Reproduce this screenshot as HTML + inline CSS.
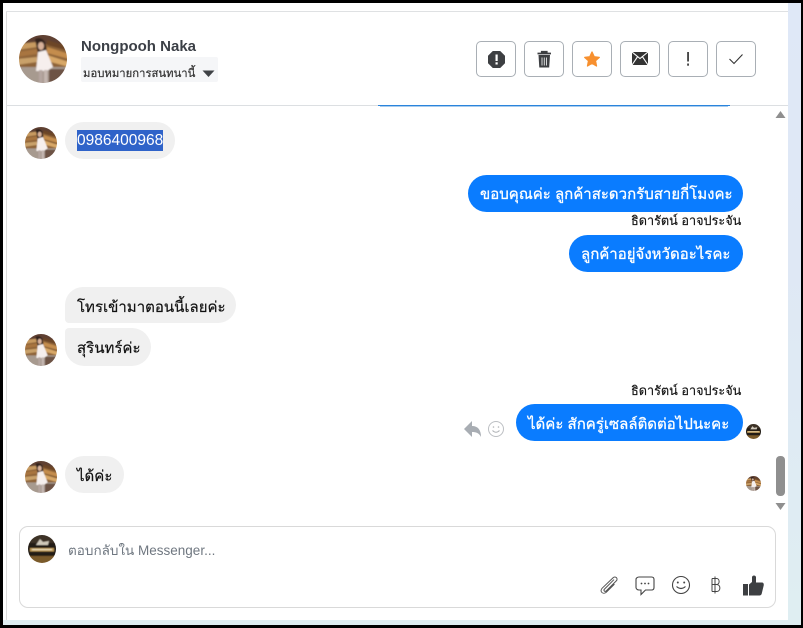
<!DOCTYPE html>
<html><head><meta charset="utf-8">
<style>
html,body{margin:0;padding:0;width:803px;height:628px;overflow:hidden;background:#000}
*{box-sizing:border-box}
body{position:relative;font-family:"Liberation Sans","Noto Sans CJK SC",sans-serif}
.a{position:absolute}
.t{position:absolute;white-space:nowrap;font-family:"Liberation Sans","DejaVu Sans","Noto Sans CJK SC",sans-serif}
.b{position:absolute;border-radius:19px;height:37px;font-size:15px;line-height:40px;padding:0 12px;white-space:nowrap;font-family:"Liberation Sans","DejaVu Sans",sans-serif}
.in{background:#f0f0f0;color:#111;-webkit-text-stroke:.2px #111;line-height:42px}
.out{background:#0a7cff;color:#fff;-webkit-text-stroke:.3px #fff}
.btn{position:absolute;top:41px;width:40px;height:36px;border:1px solid #a9afb5;border-radius:5px;background:#fff}
.btn svg{position:absolute;left:0;top:0;width:38px;height:34px}
.name{position:absolute;font-size:12.700px;color:#111;white-space:nowrap;font-family:"Liberation Sans","DejaVu Sans",sans-serif;-webkit-text-stroke:.15px #111}
svg.av{position:absolute}
</style></head><body>
<svg width="0" height="0" style="position:absolute">
<defs>
<clipPath id="c"><circle cx="24" cy="24" r="24"/></clipPath>
<clipPath id="d"><circle cx="14" cy="14" r="14"/></clipPath>
<filter id="bl" x="-10%" y="-10%" width="120%" height="120%"><feGaussianBlur stdDeviation="0.900"/></filter>
<filter id="bl2" x="-10%" y="-10%" width="120%" height="120%"><feGaussianBlur stdDeviation="0.500"/></filter>
<symbol id="girl" viewBox="0 0 48 48">
<g clip-path="url(#c)"><g filter="url(#bl)">
<rect x="-2" y="-2" width="52" height="52" fill="#8e6338"/>
<rect x="-2" y="-2" width="52" height="11" fill="#5f4030"/>
<path d="M-2 9L18 7V12L-2 15Z" fill="#c79a60"/>
<path d="M-2 17L18 14V19L-2 22Z" fill="#a8743f"/>
<path d="M-2 24L18 22V27L-2 30Z" fill="#c9a16b"/>
<path d="M28 5L50 12V16L28 10Z" fill="#6c4526"/>
<path d="M28 12L50 19V24L28 18Z" fill="#c48d4d"/>
<path d="M28 20L50 27V32L28 26Z" fill="#d8a868"/>
<rect x="-2" y="32" width="52" height="18" fill="#a79a8f"/>
<path d="M30 34H50V50H30Z" fill="#6d5344"/>
<path d="M16 4C23 1 28 6 27 16L20 20L18 14Z" fill="#33221f"/>
<ellipse cx="22" cy="11" rx="3" ry="4" fill="#d8b19a"/>
<path d="M19 17L27 15L34 32L28 36H17Z" fill="#f6efed"/>
<rect x="20" y="35" width="3.500" height="13" fill="#b5a6a0"/>
<rect x="25" y="35" width="3.500" height="13" fill="#c4b6b0"/>
</g></g>
</symbol>
<symbol id="logo" viewBox="0 0 28 28">
<g clip-path="url(#d)"><g filter="url(#bl2)">
<rect x="-1" y="-1" width="30" height="30" fill="#241a12"/>
<rect y="0" width="28" height="8" fill="#3e3228"/>
<path d="M8 10L12 4L15 7L21 6L20 10Z" fill="#cfc8ba"/>
<rect x="2" y="13" width="24" height="3.500" fill="#b99452"/>
<rect x="4" y="14" width="20" height="1.200" fill="#f0e3c2"/>
<rect x="-1" y="21" width="30" height="8" fill="#7a5a2a"/>
</g></g>
</symbol>
</defs>
</svg>

<!-- page -->
<div class="a" style="left:3px;top:3px;width:798px;height:622px;background:linear-gradient(180deg,#dfe8f7 0%,#dfe8f5 40%,#dfeef2 100%)"></div>
<div class="a" style="left:3px;top:3px;width:785px;height:617px;background:#fff"></div>
<div class="a" style="left:6px;top:11px;width:1px;height:609px;background:#dcdcdc"></div>
<div class="a" style="left:6px;top:11px;width:782px;height:1px;background:#dfe1e3"></div>
<div class="a" style="left:6px;top:105px;width:782px;height:1px;background:#dcdfe2"></div>
<div class="a" style="left:378px;top:105px;width:352px;height:1px;background:#2a84dc"></div>
<div class="a" style="left:380px;top:106px;width:348px;height:1px;background:#a8ccee"></div>

<!-- header -->
<svg class="av" style="left:19px;top:35px" width="48" height="48"><use href="#girl" width="48" height="48"/></svg>
<div class="t" style="left:81px;top:38px;font-size:15px;font-weight:bold;color:#3b3f46;line-height:17px">Nongpooh Naka</div>
<div class="a" style="left:81px;top:57px;width:137px;height:25px;background:#f5f6f8;border-radius:2px"></div>
<div class="t" style="left:83px;top:67px;font-size:11.300px;line-height:14px;color:#333;-webkit-text-stroke:.2px #333">มอบหมายการสนทนานี้</div>
<svg class="a" style="left:202px;top:70px" width="13" height="8"><path d="M0.500 0.500H12.500L6.500 7Z" fill="#3f4246"/></svg>

<div class="btn" style="left:476px"><svg viewBox="0 0 38 34"><path d="M16 9.500H23L27.500 14V21L23 25.500H16L11.500 21V14Z" fill="#3d3f42" stroke="#3d3f42" stroke-width="1" stroke-linejoin="round"/><rect x="18.500" y="12.500" width="2.200" height="6.500" fill="#fff"/><rect x="18.500" y="20.300" width="2.200" height="2.200" fill="#fff"/></svg></div>
<div class="btn" style="left:524px"><svg viewBox="0 0 38 34"><path d="M12.500 11.500H26M16.800 11V9.800H21.700V11" stroke="#3d3f42" stroke-width="1.800" fill="none"/><path d="M13.500 13H25L24.200 25.500H14.300Z" fill="#3d3f42"/><path d="M17 15.500V23.500M19.250 15.500V23.500M21.500 15.500V23.500" stroke="#fff" stroke-width="0.800"/></svg></div>
<div class="btn" style="left:572px"><svg viewBox="0 0 38 34"><path d="M19 10L21.200 14.800L26.300 15.400L22.500 18.800L23.500 24L19 21.300L14.500 24L15.500 18.800L11.700 15.400L16.800 14.800Z" fill="#f7902f" stroke="#f7902f" stroke-linejoin="round" stroke-width="1.300"/></svg></div>
<div class="btn" style="left:620px"><svg viewBox="0 0 38 34"><rect x="11" y="10" width="16" height="13" rx="1" fill="#333"/><path d="M11 10L19 16.500L27 10M11 23L16.500 14.800M27 23L21.500 14.800" stroke="#fff" stroke-width="1.100" fill="none"/></svg></div>
<div class="btn" style="left:668px"><svg viewBox="0 0 38 34"><rect x="18.200" y="10" width="1.700" height="9.500" fill="#333"/><rect x="18.200" y="21.500" width="1.700" height="2.200" fill="#333"/></svg></div>
<div class="btn" style="left:716px"><svg viewBox="0 0 38 34"><path d="M12.500 17L17 21.500L25.500 12.500" stroke="#333" stroke-width="1.100" fill="none"/></svg></div>

<!-- messages -->
<svg class="av" style="left:25px;top:127px" width="32" height="32"><use href="#girl" width="32" height="32"/></svg>
<div class="a" style="left:65px;top:122px;width:110px;height:37px;background:#f0f0f0;border-radius:19px"></div>
<div class="t" style="left:77px;top:130px;height:21px;line-height:22px;font-size:15.500px;background:#2f63c9;color:#fff">0986400968</div>

<div class="b out" style="left:468px;top:175px;width:275px">ขอบคุณค่ะ ลูกค้าสะดวกรับสายกี่โมงคะ</div>
<div class="name" style="left:631px;top:214px;line-height:15px">ธิดารัตน์ อาจประจัน</div>
<div class="b out" style="left:569px;top:235px;width:174px">ลูกค้าอยู่จังหวัดอะไรคะ</div>

<div class="b in" style="left:65px;top:287px;height:36px;width:171px;border-radius:19px 19px 19px 4px">โทรเข้ามาตอนนี้เลยค่ะ</div>
<div class="b in" style="left:65px;top:328px;height:38px;width:86px;border-radius:4px 19px 19px 19px">สุรินทร์ค่ะ</div>
<svg class="av" style="left:25px;top:334px" width="32" height="32"><use href="#girl" width="32" height="32"/></svg>

<div class="name" style="left:631px;top:384px;line-height:15px">ธิดารัตน์ อาจประจัน</div>
<div class="b out" style="left:516px;top:404px;width:227px;line-height:41px">ได้ค่ะ สักครู่เซลล์ติดต่อไปนะคะ</div>
<svg class="a" style="left:463px;top:420px" width="20" height="18"><path d="M9 1L1 9L9 17V12C13 12 16 13 18 17C18 10 15 6 9 6Z" fill="#a8adb3"/></svg>
<svg class="a" style="left:487px;top:420px" width="18" height="18"><circle cx="9" cy="9" r="7.500" fill="none" stroke="#bcbfc3"/><circle cx="6.500" cy="7" r="0.800" fill="#b0b3b7"/><circle cx="11.500" cy="7" r="0.800" fill="#b0b3b7"/><path d="M5.500 10.500Q9 14 12.500 10.500" fill="none" stroke="#b0b3b7"/></svg>
<svg class="av" style="left:746px;top:424px" width="15" height="15"><use href="#logo" width="15" height="15"/></svg>

<svg class="av" style="left:25px;top:461px" width="32" height="32"><use href="#girl" width="32" height="32"/></svg>
<div class="b in" style="left:65px;top:456px;width:59px">ได้ค่ะ</div>
<svg class="av" style="left:746px;top:476px" width="15" height="15"><use href="#girl" width="15" height="15"/></svg>

<!-- scrollbar -->
<svg class="a" style="left:775px;top:110px" width="11" height="9"><path d="M5.500 1L10.500 8H0.500Z" fill="#8f8f8f"/></svg>
<div class="a" style="left:776px;top:456px;width:9px;height:40px;border-radius:4px;background:#8f8f8f"></div>
<svg class="a" style="left:775px;top:502px" width="11" height="9"><path d="M0.500 1H10.500L5.500 8Z" fill="#8f8f8f"/></svg>

<!-- composer -->
<div class="a" style="left:19px;top:526px;width:757px;height:82px;border:1px solid #d9d9d9;border-radius:9px;background:#fff"></div>
<svg class="av" style="left:28px;top:535px" width="28" height="28"><use href="#logo" width="28" height="28"/></svg>
<div class="t" style="left:68px;top:543px;font-size:13.500px;line-height:16px;color:#6f7780">ตอบกลับใน Messenger...</div>

<svg class="a" style="left:599px;top:575px" width="20" height="20" viewBox="0 0 22 22"><path d="M16.500 5L6 15.500C4.500 17 6.500 19 8 17.500L19 6.500C21.500 4 18 0.500 15.500 3L3.500 14.500C0 18 4.500 22 8 19L17 10" fill="none" stroke="#555" stroke-width="1.100"/></svg>
<svg class="a" style="left:635px;top:576px" width="20" height="20" viewBox="0 0 20 20"><path d="M4 1H16.500C18 1 19 2 19 3.500V11.500C19 13 18 14 16.500 14H10.500L6 18.500V14H4C2.500 14 1 13 1 11.500V3.500C1 2 2.500 1 4 1Z" fill="none" stroke="#444" stroke-width="1.100"/><circle cx="6.500" cy="7.500" r="0.900" fill="#444"/><circle cx="10" cy="7.500" r="0.900" fill="#444"/><circle cx="13.500" cy="7.500" r="0.900" fill="#444"/></svg>
<svg class="a" style="left:671px;top:575px" width="20" height="20" viewBox="0 0 20 20"><circle cx="10" cy="10" r="8.500" fill="none" stroke="#444" stroke-width="1.100"/><circle cx="6.800" cy="7.500" r="1" fill="#444"/><circle cx="13.200" cy="7.500" r="1" fill="#444"/><path d="M5.500 11.500Q10 15.500 14.500 11.500" fill="none" stroke="#444" stroke-width="1.100"/></svg>
<svg class="a" style="left:711px;top:576px" width="11" height="18" viewBox="0 0 11 18"><path d="M4 0.500V17.500M1 2.500H5.500C9 2.500 9 8.500 5.500 8.500H1M5.500 8.500C10 8.500 10 15.500 5.500 15.500H1M1 2.500V15.500" fill="none" stroke="#444" stroke-width="1"/></svg>
<svg class="a" style="left:743px;top:575px" width="21" height="21" viewBox="0 0 21 21"><rect x="0" y="9" width="5" height="11.500" fill="#3d3f42"/><path d="M6 20.500V9.500L9 7V2C9.500 0 12.500 0 13 2V7.500H19C20.500 7.500 21 9 20.700 10.500L18.700 18.800C18.400 20 17.500 20.500 16.500 20.500Z" fill="#3d3f42"/></svg>
</body></html>
